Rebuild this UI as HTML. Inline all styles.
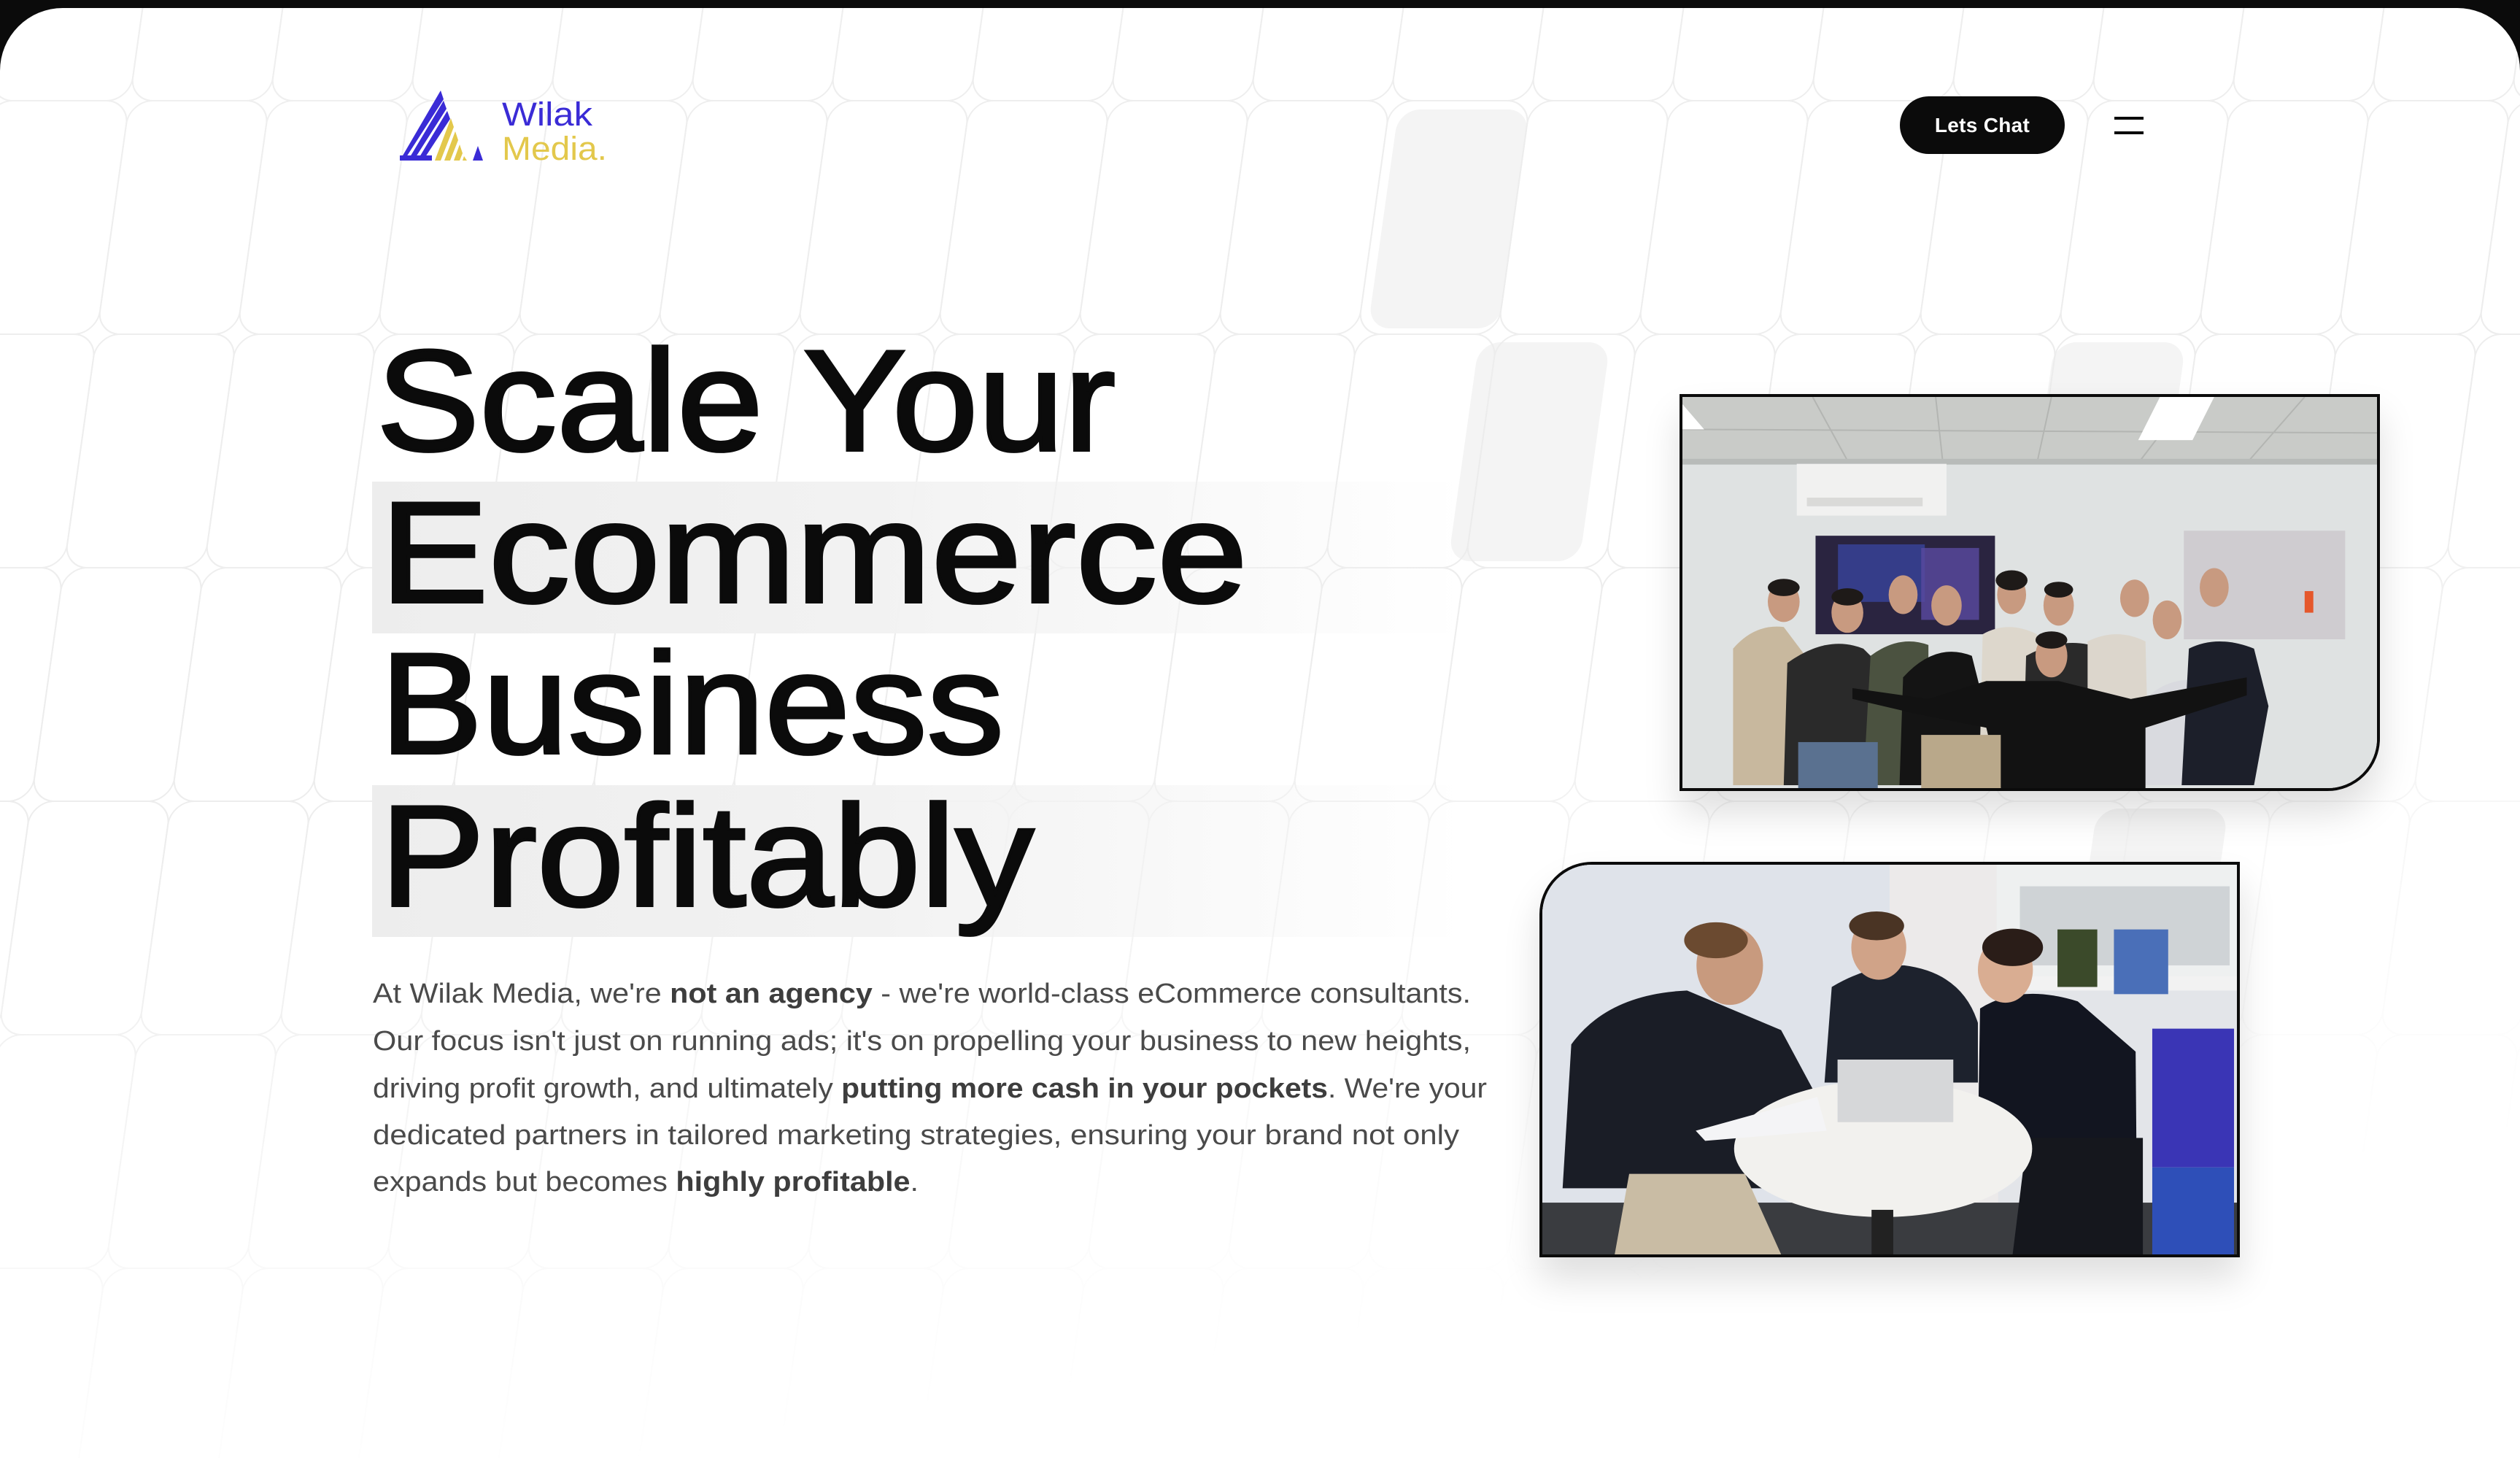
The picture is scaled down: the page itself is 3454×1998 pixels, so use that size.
<!DOCTYPE html>
<html><head><meta charset="utf-8">
<style>
*{margin:0;padding:0;box-sizing:border-box}
html,body{width:3454px;height:1998px;overflow:hidden;background:#0b0b0b}
.panel{position:absolute;left:0;top:11px;width:3454px;height:1987px;background:#fff;border-radius:86px 86px 0 0;overflow:hidden}
.abs{position:absolute}
.band{position:absolute;left:510px;width:1500px;height:208px;background:linear-gradient(90deg,#ededed 0%,#f2f2f2 45%,rgba(245,245,245,0) 100%)}
.btn{position:absolute;left:2604px;top:132px;width:226px;height:79px;background:#0b0b0b;border-radius:40px;color:#fff;font:600 28px "Liberation Sans",sans-serif;text-align:center;line-height:79px;letter-spacing:0.3px}
.ham{position:absolute;left:2898px;width:40px;height:4px;background:#0b0b0b}
.photo{position:absolute;border:4px solid #0b0b0b;overflow:hidden;box-shadow:0 30px 50px rgba(0,0,0,0.13)}
</style></head><body>
<div class="panel">
<svg class="abs" style="left:0;top:-11px" width="3454" height="1998">
<defs>
<linearGradient id="fade" x1="0" y1="0" x2="0.3" y2="1">
<stop offset="0" stop-color="#fff" stop-opacity="0.8"/>
<stop offset="0.55" stop-color="#fff" stop-opacity="0.9"/>
<stop offset="0.9" stop-color="#fff" stop-opacity="0.15"/>
<stop offset="1" stop-color="#fff" stop-opacity="0"/>
</linearGradient>
<mask id="m"><rect width="3454" height="1998" fill="url(#fade)"/></mask>
</defs>
<g transform="skewX(-8)" fill="#f4f4f4">
<rect x="1938" y="150" width="180" height="300" rx="30"/>
<rect x="2093" y="469" width="180" height="300" rx="30"/>
<rect x="2882" y="469" width="180" height="300" rx="30"/>
<rect x="3030" y="1108" width="180" height="300" rx="30"/>
</g>
<g mask="url(#m)">
<g transform="skewX(-8)">
<g fill="none" stroke="#ebebeb" stroke-width="2" id="cells"></g>
</g>
</g>
</svg>

<div class="band" style="top:649px"></div>
<div class="band" style="top:1065px"></div>

<!-- logo -->
<svg class="abs" style="left:548px;top:113px" width="116" height="98" viewBox="0 0 116 98">
<g fill="#3a2bd6">
<polygon points="0,96 56,0 60,12 9,91"/>
<polygon points="14,91 60,14 64,25 22,91"/>
<polygon points="27,91 65,28 69,39 35,91"/>
<rect x="0" y="89" width="44" height="7"/>
<polygon points="100,96 114,96 107,76"/>
</g>
<g fill="#e3c84c">
<polygon points="48,96 70,38 74,50 56,96"/>
<polygon points="61,96 76,56 80,68 69,96"/>
<polygon points="74,96 82,74 86,86 82,96"/>
<polygon points="86,96 88,90 92,96"/>
</g>
</svg>
<svg class="abs" style="left:680px;top:102px" width="200" height="110">
<text x="8" y="59" font-family="Liberation Sans,sans-serif" font-size="45" fill="#3a2bd6" textLength="124" lengthAdjust="spacingAndGlyphs">Wilak</text>
<text x="8" y="106" font-family="Liberation Sans,sans-serif" font-size="45" fill="#e3c84c" textLength="144" lengthAdjust="spacingAndGlyphs">Media.</text>
</svg>

<div class="btn" style="top:121px">Lets Chat</div>
<div class="ham" style="top:149px"></div>
<div class="ham" style="top:169px"></div>

<!-- headline -->
<svg class="abs" style="left:0;top:-11px" width="2100" height="1300">
<g font-family="Liberation Sans,sans-serif" font-size="197" fill="#0b0b0b" stroke="#0b0b0b" stroke-width="4">
<text x="516" y="617" textLength="1013" lengthAdjust="spacingAndGlyphs">Scale Your</text>
<text x="521" y="825" textLength="1189" lengthAdjust="spacingAndGlyphs">Ecommerce</text>
<text x="521" y="1032" textLength="855" lengthAdjust="spacingAndGlyphs">Business</text>
<text x="521" y="1241" textLength="896" lengthAdjust="spacingAndGlyphs">Profitably</text>
</g>
</svg>

<!-- paragraph -->
<svg class="abs" style="left:0;top:-11px" width="2100" height="1700">
<g font-family="Liberation Sans,sans-serif" font-size="38" fill="#4a4a4a">
<text x="511" y="1374" textLength="1505" lengthAdjust="spacingAndGlyphs">At Wilak Media, we're <tspan font-weight="bold" fill="#3d3d3d">not an agency</tspan> - we're world-class eCommerce consultants.</text>
<text x="511" y="1439" textLength="1505" lengthAdjust="spacingAndGlyphs">Our focus isn't just on running ads; it's on propelling your business to new heights,</text>
<text x="511" y="1504" textLength="1527" lengthAdjust="spacingAndGlyphs">driving profit growth, and ultimately <tspan font-weight="bold" fill="#3d3d3d">putting more cash in your pockets</tspan>. We're your</text>
<text x="511" y="1568" textLength="1489" lengthAdjust="spacingAndGlyphs">dedicated partners in tailored marketing strategies, ensuring your brand not only</text>
<text x="511" y="1632" textLength="748" lengthAdjust="spacingAndGlyphs">expands but becomes <tspan font-weight="bold" fill="#3d3d3d">highly profitable</tspan>.</text>
</g>
</svg>

<!-- top photo -->
<div class="photo" style="left:2302px;top:529px;width:960px;height:544px;border-radius:0 0 72px 0">
<svg width="952" height="536" viewBox="0 0 960 544" preserveAspectRatio="none">
<rect width="960" height="544" fill="#dfe2e2"/>
<rect width="960" height="92" fill="#c9cbc8"/>
<g stroke="#b3b5b2" stroke-width="2"><line x1="0" y1="45" x2="960" y2="50"/><line x1="180" y1="0" x2="230" y2="92"/><line x1="350" y1="0" x2="360" y2="92"/><line x1="510" y1="0" x2="490" y2="92"/><line x1="700" y1="0" x2="630" y2="92"/><line x1="860" y1="0" x2="780" y2="92"/></g>
<polygon points="0,10 30,45 0,45" fill="#fff"/>
<polygon points="660,0 735,0 705,60 630,60" fill="#fff"/>
<rect x="0" y="86" width="960" height="8" fill="#b8bbb9"/>
<rect x="158" y="93" width="207" height="72" fill="#f1f1f0"/>
<rect x="172" y="140" width="160" height="12" fill="#dadad8"/>
<rect x="184" y="193" width="248" height="137" fill="#2a2440"/>
<rect x="215" y="205" width="120" height="80" fill="#3b48a8" opacity="0.7"/>
<rect x="330" y="210" width="80" height="100" fill="#5a4aa0" opacity="0.8"/>
<rect x="693" y="186" width="223" height="151" fill="#cfccd0"/>
<rect x="860" y="270" width="12" height="30" fill="#e5572b"/>
<g fill="#2a2a2a">
<path d="M70 540 L70 350 Q100 315 140 320 L170 360 L170 540Z" fill="#c8b89e"/>
<path d="M140 540 L145 370 Q200 330 250 350 L300 400 L300 540Z"/>
<path d="M250 540 L260 360 Q300 330 340 345 L340 540Z" fill="#4b5240"/>
<path d="M300 540 L305 390 Q350 340 400 360 L420 440 L420 540Z" fill="#141414"/>
<path d="M410 540 L415 330 Q450 310 490 330 L500 540Z" fill="#ddd7cc"/>
<path d="M470 540 L475 360 Q530 330 580 350 L590 540Z"/>
<path d="M560 540 L560 340 Q600 320 640 340 L645 540Z" fill="#dcd6cc"/>
<path d="M630 540 L640 420 Q680 380 740 400 L760 540Z" fill="#d9dadf"/>
<path d="M690 540 L700 350 Q740 330 790 350 L810 430 L790 540Z" fill="#1c1f2a"/>
<path d="M235 405 L340 420 L420 395 L520 395 L620 420 L780 390 L780 415 L640 460 L640 544 L440 544 L420 460 L320 440 L235 420Z" fill="#121212"/>
</g>
<g fill="#c89a80">
<ellipse cx="140" cy="285" rx="22" ry="28"/><ellipse cx="228" cy="300" rx="22" ry="28"/><ellipse cx="305" cy="275" rx="20" ry="27"/><ellipse cx="365" cy="290" rx="21" ry="28"/><ellipse cx="455" cy="275" rx="20" ry="27"/><ellipse cx="520" cy="290" rx="21" ry="28"/><ellipse cx="625" cy="280" rx="20" ry="26"/><ellipse cx="670" cy="310" rx="20" ry="27"/><ellipse cx="735" cy="265" rx="20" ry="27"/><ellipse cx="510" cy="360" rx="22" ry="30"/>
</g>
<g fill="#1e1a18"><ellipse cx="140" cy="265" rx="22" ry="12"/><ellipse cx="228" cy="278" rx="22" ry="12"/><ellipse cx="455" cy="255" rx="22" ry="14"/><ellipse cx="520" cy="268" rx="20" ry="11"/><ellipse cx="510" cy="338" rx="22" ry="12"/></g>
<rect x="160" y="480" width="110" height="64" fill="#5a7190"/>
<rect x="330" y="470" width="110" height="74" fill="#b9a88a"/>
</svg>
</div>

<!-- bottom photo -->
<div class="photo" style="left:2110px;top:1170px;width:960px;height:542px;border-radius:72px 0 0 0">
<svg width="952" height="534" viewBox="0 0 960 542" preserveAspectRatio="none">
<rect width="960" height="542" fill="#e3e5e9"/>
<rect x="0" y="0" width="480" height="542" fill="#dfe3ea"/>
<rect x="480" y="0" width="150" height="542" fill="#eceaea"/>
<rect x="628" y="0" width="332" height="160" fill="#eef0f0"/>
<rect x="660" y="30" width="290" height="110" fill="#cfd3d6"/>
<rect x="628" y="155" width="332" height="20" fill="#f2f2f2"/>
<rect x="712" y="90" width="55" height="80" fill="#3b4a2a"/>
<rect x="790" y="90" width="75" height="90" fill="#4a6fb8"/>
<rect x="0" y="470" width="960" height="72" fill="#3a3c40"/>
<path d="M28 450 L40 250 Q90 180 200 175 L330 230 L378 320 L340 450Z" fill="#1a1d26"/>
<path d="M100 542 L120 430 L280 430 L330 542Z" fill="#c9bca4"/>
<ellipse cx="259" cy="140" rx="46" ry="55" fill="#c89a7e"/>
<ellipse cx="240" cy="105" rx="44" ry="25" fill="#6b4a30"/>
<path d="M390 303 L400 170 Q450 140 500 140 Q580 150 602 220 L602 303Z" fill="#1d222d"/>
<ellipse cx="465" cy="115" rx="38" ry="45" fill="#d0a388"/>
<ellipse cx="462" cy="85" rx="38" ry="20" fill="#4a3424"/>
<path d="M602 382 L605 200 Q660 165 740 190 L820 260 L821 382Z" fill="#121520"/>
<path d="M650 542 L670 380 L830 380 L830 542Z" fill="#15171d"/>
<ellipse cx="640" cy="146" rx="38" ry="46" fill="#d9ad92"/>
<ellipse cx="650" cy="115" rx="42" ry="26" fill="#2a1d18"/>
<ellipse cx="471" cy="395" rx="206" ry="95" fill="#f2f1ee"/>
<rect x="455" y="480" width="30" height="62" fill="#222"/>
<rect x="408" y="271" width="160" height="87" fill="#d6d7d9"/>
<polygon points="212,370 380,323 393,370 225,384" fill="#f4f4f6"/>
<rect x="843" y="228" width="113" height="193" fill="#3a35b5"/>
<rect x="843" y="421" width="113" height="121" fill="#2e4fb8"/>
</svg>
</div>
</div>
<script>
(function(){
var g=document.getElementById('cells'),s='';
for(var r=-1;r<7;r++){var y=138-320+r*320;
for(var c=-1;c<21;c++){var x=5+c*192;
s+='<rect x="'+x+'" y="'+y+'" width="192" height="320" rx="32"/>';}}
g.innerHTML=s;})();
</script>
</body></html>
